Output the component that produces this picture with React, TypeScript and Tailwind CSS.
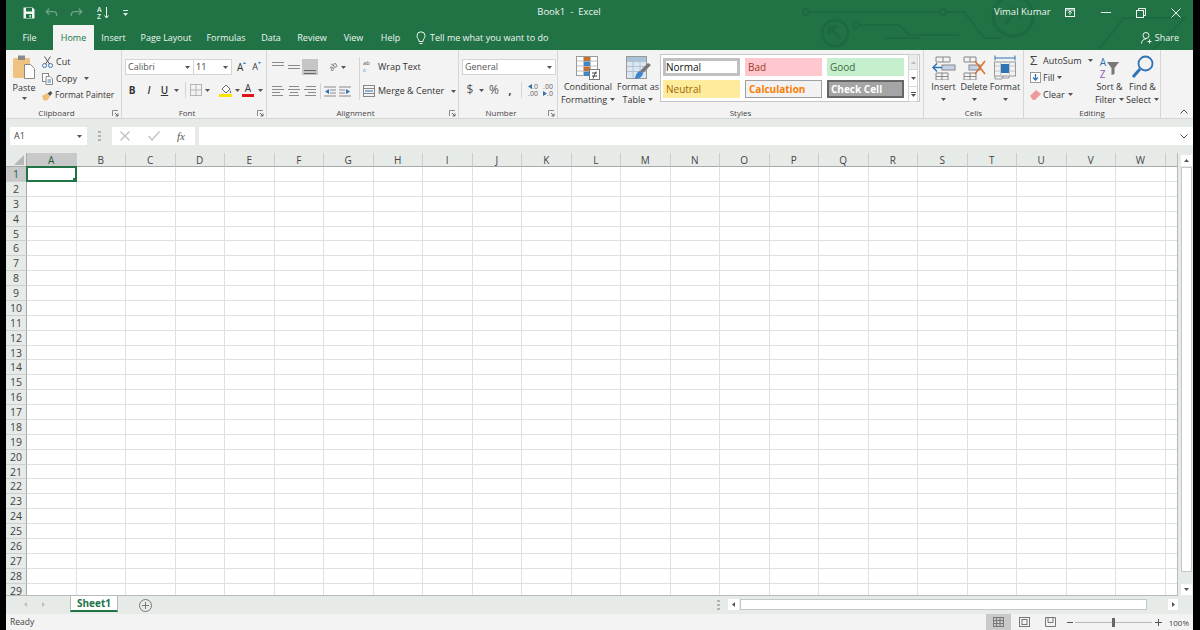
import type { ReactNode } from "react";

const FONT = "font-['Open_Sans','Noto_Sans',sans-serif]";
const COLUMNS = "ABCDEFGHIJKLMNOPQRSTUVW".split("");
const ROWS = Array.from({ length: 29 }, (_, i) => i + 1);

function Caret({ className = "" }: { className?: string }) {
  return (
    <svg width="5" height="3" viewBox="0 0 5 3" className={`shrink-0 ${className}`}>
      <path d="M0 0h5L2.500 3z" fill="#555" />
    </svg>
  );
}

function Launcher() {
  return (
    <svg width="7" height="7" viewBox="0 0 7 7" className="absolute right-[2px] top-[3px]">
      <path d="M0.500 6V0.500H6" fill="none" stroke="#8a8a8a" />
      <path d="M3 3l3 3M6 3.500V6H3.500" fill="none" stroke="#666" />
    </svg>
  );
}

function Tool({ w, children }: { w: number; children?: ReactNode }) {
  return (
    <span className="flex h-[16px] shrink-0 items-center justify-center" style={{ width: w }}>
      {children}
    </span>
  );
}

function Sep() {
  return <span className="block h-[16px] w-px bg-[#d4d4d4]" />;
}

function Dots() {
  return (
    <>
      <span className="h-[2px] w-[3px] bg-[#b0b4b2]" />
      <span className="h-[2px] w-[3px] bg-[#b0b4b2]" />
      <span className="h-[2px] w-[3px] bg-[#b0b4b2]" />
    </>
  );
}

function Group({
  w,
  label,
  launcher,
  children,
}: {
  w: number;
  label: string;
  launcher?: boolean;
  children: ReactNode;
}) {
  return (
    <div className="flex h-full shrink-0 flex-col border-r border-[#d6d6d6]" style={{ width: w }}>
      <div className="flex h-[57px] shrink-0">{children}</div>
      <div
        className={`relative h-[12px] text-center text-[8px] leading-[12px] text-[#444] ${
          launcher ? "pr-[14px]" : ""
        }`}
      >
        {label}
        {launcher && <Launcher />}
      </div>
    </div>
  );
}

function BigButton({
  w,
  lines,
  icon,
}: {
  w: number;
  lines: string[];
  icon: ReactNode;
}) {
  return (
    <div className="flex shrink-0 flex-col items-center" style={{ width: w }}>
      <div className="flex h-[28px] items-end justify-center">{icon}</div>
      <div className="text-center text-[9px] leading-[13px] whitespace-nowrap text-[#333]">
        {lines[0]}
      </div>
      <div className="flex h-[13px] items-center justify-center gap-[3px] text-[9px] leading-[13px] whitespace-nowrap text-[#333]">
        {lines[1]}
        <Caret />
      </div>
    </div>
  );
}

function StyleCell({ className, children }: { className: string; children: string }) {
  return (
    <div className={`flex h-[18px] w-[77px] items-center text-[10px] ${className}`}>
      {children}
    </div>
  );
}

function LinesIcon({ rows, highlight = false }: { rows: [number, number][]; highlight?: boolean }) {
  return (
    <svg width="12" height="10" viewBox="0 0 12 10">
      {rows.map(([x, w], i) => (
        <rect key={i} x={x} y={i * 3} width={w} height="1" fill={highlight ? "#666" : "#8a8a8a"} />
      ))}
    </svg>
  );
}

function TitleArt() {
  return (
    <svg
      width="400"
      height="50"
      viewBox="800 0 400 50"
      className="absolute top-0 right-0"
      fill="none"
      stroke="#1d6a40"
      strokeWidth="2"
    >
      <circle cx="813" cy="12" r="3" />
      <path d="M816 12h131" />
      <circle cx="950" cy="12" r="3" />
      <path d="M953 12h18l20 26h18" />
      <circle cx="842" cy="33" r="13" strokeWidth="3" />
      <path d="M848 39l-12-12M836 35v-8h8" strokeWidth="3" />
      <circle cx="863" cy="25" r="3" />
      <path d="M866 25h40l10 10h50" />
      <circle cx="1020" cy="16" r="20" strokeWidth="3" />
      <path d="M1012 24l15-15M1017 9h10v10" strokeWidth="3" />
      <path d="M892 38h36" />
      <path d="M1105 50l26-32h62M1160 50l32-32" />
    </svg>
  );
}

function TitleBar() {
  const tabs: [string, number][] = [
    ["File", 47],
    ["Home", 41],
    ["Insert", 39],
    ["Page Layout", 66],
    ["Formulas", 54],
    ["Data", 36],
    ["Review", 46],
    ["View", 37],
    ["Help", 37],
  ];
  return (
    <div className="relative h-[50px] shrink-0 bg-[#217346] text-[#eef5f1]">
      <TitleArt />
      <div className="relative flex h-[25px] items-center">
        <svg width="12" height="12" viewBox="0 0 12 12" className="ml-[17px]">
          <path d="M0.500 0.500h9l2 2v9h-11z" fill="#f2f7f4" />
          <rect x="3" y="1" width="6" height="3.500" fill="#217346" />
          <rect x="3" y="7" width="6" height="4" fill="#217346" />
          <rect x="6.500" y="8" width="1.300" height="2.500" fill="#f2f7f4" />
        </svg>
        <svg width="14" height="11" viewBox="0 0 16 11" className="ml-[10px]" fill="none" stroke="#6fa48a" strokeWidth="1.500">
          <path d="M5 1L1.500 4.500 5 8M2 4.500h8a3.500 3.500 0 0 1 3 5" />
        </svg>
        <Caret className="ml-[2px] opacity-40" />
        <svg width="14" height="11" viewBox="0 0 16 11" className="ml-[3px]" fill="none" stroke="#6fa48a" strokeWidth="1.500">
          <path d="M11 1l3.500 3.500L11 8M14 4.500H6a3.500 3.500 0 0 0-3 5" />
        </svg>
        <Caret className="ml-[2px] opacity-40" />
        <div className="ml-[7px] flex h-[14px] w-[14px] flex-col text-[7px] leading-[7px] font-semibold">
          <span>A</span>
          <span>Z</span>
        </div>
        <svg width="5" height="12" viewBox="0 0 5 12" className="-ml-[7px]" fill="none" stroke="#eef5f1">
          <path d="M2.500 0v11M0.500 8.500l2 2.500 2-2.500" />
        </svg>
        <svg width="5" height="6" viewBox="0 0 5 6" className="ml-[14px]" fill="#dcebe3">
          <rect width="5" height="1" />
          <path d="M0 3h5L2.500 6z" />
        </svg>
        <div className="absolute left-[563px] -translate-x-1/2 text-[9.500px] whitespace-pre">
          Book1{"  "}-{"  "}Excel
        </div>
        <div className="absolute left-[988px] text-[9.500px] whitespace-nowrap">Vimal Kumar</div>
        <svg width="10" height="9" viewBox="0 0 10 9" className="absolute left-[1059px]" fill="none" stroke="#eef5f1">
          <rect x="0.500" y="0.500" width="9" height="8" />
          <path d="M5 7V3M3.200 4.800L5 3l1.800 1.800" />
          <path d="M0.500 2h9" />
        </svg>
        <div className="absolute left-[1095px] h-px w-[10px] bg-[#eef5f1]" />
        <svg width="10" height="10" viewBox="0 0 10 10" className="absolute left-[1130px]" fill="none" stroke="#eef5f1">
          <rect x="0.500" y="2.500" width="7" height="7" />
          <path d="M2.500 2.500v-2h7v7h-2" />
        </svg>
        <svg width="10" height="10" viewBox="0 0 10 10" className="absolute left-[1165px]" fill="none" stroke="#eef5f1">
          <path d="M0.500 0.500l9 9M9.500 0.500l-9 9" />
        </svg>
      </div>
      <div className="relative flex h-[25px]">
        {tabs.map(([name, w]) => (
          <div
            key={name}
            className={`flex shrink-0 items-center justify-center text-[9px] ${
              name === "Home" ? "bg-[#f3f3f3] text-[#217346]" : ""
            }`}
            style={{ width: w }}
          >
            {name}
          </div>
        ))}
        <svg width="10" height="14" viewBox="0 0 10 14" className="mt-[6px] ml-[7px]" fill="none" stroke="#eef5f1">
          <path d="M3 10.500C3 8 1 7.500 1 4.800a4 4 0 0 1 8 0C9 7.500 7 8 7 10.500zM3.500 12.500h3" />
        </svg>
        <div className="ml-[4px] flex items-center text-[9px] whitespace-nowrap">
          Tell me what you want to do
        </div>
        <div className="absolute right-[14px] flex h-full items-center gap-[3px] text-[9px]">
          <svg width="11" height="12" viewBox="0 0 11 12" fill="none" stroke="#eef5f1">
            <circle cx="5" cy="3.500" r="3" />
            <path d="M0.500 11.500c0-3 2-4.500 4.500-4.500M8.500 7.500v4M6.500 9.500h4" />
          </svg>
          Share
        </div>
      </div>
    </div>
  );
}

function Clipboard() {
  return (
    <Group w={116} label="Clipboard" launcher>
      <div className="flex w-[36px] shrink-0 flex-col items-center pt-[5px]">
        <svg width="22" height="24" viewBox="0 0 22 24">
          <rect x="0" y="3" width="17" height="20" rx="1" fill="#efc27f" />
          <rect x="5" y="0.500" width="7" height="4.500" fill="#8b8b8b" />
          <path d="M11.500 9.500h6l4 4v10h-10z" fill="#fff" stroke="#8a8a8a" />
        </svg>
        <div className="mt-[2px] text-[9px] leading-[13px] text-[#333]">Paste</div>
        <Caret className="mt-[3px]" />
      </div>
      <div className="flex flex-col pt-[3px] text-[9px] whitespace-nowrap text-[#333]">
        <div className="flex h-[17px] items-center">
          <svg width="11" height="12" viewBox="0 0 11 12" fill="none" stroke="#3f79b5" className="mr-[3px]">
            <circle cx="2.500" cy="9.500" r="2" />
            <circle cx="8.500" cy="9.500" r="2" />
            <path d="M3.500 8L8.500 0.500M7.500 8L2.500 0.500" stroke="#555" />
          </svg>
          Cut
        </div>
        <div className="flex h-[17px] items-center">
          <svg width="11" height="12" viewBox="0 0 11 12" fill="#fff" stroke="#8a8a8a" className="mr-[3px]">
            <rect x="0.500" y="0.500" width="6" height="8" />
            <path d="M4 3.500h4l2.500 2.500v5.500H4z" />
            <path d="M5.500 7h3.500M5.500 9h3.500" stroke="#3f79b5" />
          </svg>
          Copy
          <Caret className="ml-[7px]" />
        </div>
        <div className="flex h-[17px] items-center text-[8.500px]">
          <svg width="11" height="11" viewBox="0 0 11 11" className="mr-[2px]">
            <path d="M0 6l5-3 3 4-3 3.500H1.500z" fill="#edc07a" />
            <path d="M5.500 3.500l3-2.500 2 2-2.500 3z" fill="#555" />
          </svg>
          Format Painter
        </div>
      </div>
    </Group>
  );
}

function Font() {
  return (
    <Group w={145} label="Font" launcher>
      <div className="flex flex-col pt-[9px] pl-[2px] text-[#333]">
        <div className="flex h-[16px] items-center">
          <div className="ml-[1px] flex h-[16px] w-[69px] items-center justify-between border border-[#d4d4d4] bg-white pr-[3px] pl-[2px] text-[9px] text-[#555]">
            Calibri
            <Caret />
          </div>
          <div className="flex h-[16px] w-[38px] items-center justify-between border border-l-0 border-[#d4d4d4] bg-white pr-[3px] pl-[2px] text-[9px]">
            11
            <Caret />
          </div>
          <span className="ml-[5px] text-[10px]">A</span>
          <svg width="3" height="2" viewBox="0 0 3 2" className="mb-[8px]"><path d="M0 2h3L1.500 0z" fill="#3f79b5" /></svg>
          <span className="ml-[6px] text-[9px]">A</span>
          <svg width="3" height="2" viewBox="0 0 3 2" className="mb-[8px]"><path d="M0 0h3L1.500 2z" fill="#3f79b5" /></svg>
        </div>
        <div className="mt-[7px] flex h-[16px] items-center text-[10px]">
          <Tool w={16}><b>B</b></Tool>
          <Tool w={18}><i className="font-semibold">I</i></Tool>
          <Tool w={13}><span className="font-semibold underline">U</span></Tool>
          <Tool w={11}><Caret /></Tool>
          <Tool w={6}><Sep /></Tool>
          <Tool w={16}>
            <svg width="12" height="12" viewBox="0 0 12 12" fill="none" stroke="#b5b5b5">
              <rect x="0.500" y="0.500" width="11" height="11" />
              <path d="M6 0.500v11M0.500 6h11" />
            </svg>
          </Tool>
          <Tool w={6}><Caret /></Tool>
          <Tool w={6} />
          <Tool w={18}>
            <svg width="13" height="14" viewBox="0 0 13 14">
              <path d="M3 6l4-4 4 4-4 4z" fill="#fff" stroke="#666" />
              <path d="M11 7c1 1.500 1.500 2 1 3-.8.600-1.500-.4-1-3z" fill="#666" />
              <rect y="11" width="13" height="3" fill="#ffe600" />
            </svg>
          </Tool>
          <Tool w={6}><Caret /></Tool>
          <Tool w={16}>
            <span className="relative flex h-[14px] w-[12px] justify-center text-[10px] leading-[11px]">
              A
              <span className="absolute bottom-0 left-0 h-[3px] w-[12px] bg-[#e0121c]" />
            </span>
          </Tool>
          <Tool w={8}><Caret /></Tool>
        </div>
      </div>
    </Group>
  );
}

function Alignment() {
  const left: [number, number][] = [[0, 10], [0, 12], [0, 8], [0, 11]];
  const center: [number, number][] = [[1, 10], [0, 12], [2, 8], [1, 10]];
  const right: [number, number][] = [[2, 10], [0, 12], [4, 8], [1, 11]];
  return (
    <Group w={192} label="Alignment" launcher>
      <div className="flex flex-col pt-[9px] pl-[3px]">
        <div className="flex h-[16px]">
          <Tool w={16}><LinesIcon rows={[[0, 12], [0, 12], [20, 0], [20, 0]]} /></Tool>
          <Tool w={16}><LinesIcon rows={[[20, 0], [0, 12], [0, 12], [20, 0]]} /></Tool>
          <span className="flex h-[16px] w-[16px] items-end justify-center bg-[#c6c6c6] pb-[1px]">
            <LinesIcon highlight rows={[[20, 0], [20, 0], [0, 12], [0, 12]]} />
          </span>
          <Tool w={8} />
          <Tool w={14}>
            <span className="-rotate-45 text-[7.500px] leading-none text-[#555]">ab</span>
          </Tool>
          <Tool w={6}><Caret /></Tool>
        </div>
        <div className="mt-[8px] flex h-[16px]">
          <Tool w={16}><LinesIcon rows={left} /></Tool>
          <Tool w={16}><LinesIcon rows={center} /></Tool>
          <Tool w={16}><LinesIcon rows={right} /></Tool>
          <Tool w={5}><Sep /></Tool>
          <Tool w={14}>
            <svg width="12" height="11" viewBox="0 0 12 11">
              <path d="M0 1h12M6 4h6M6 7h6M0 10h12" stroke="#8a8a8a" />
              <path d="M5 3v5L1 5.500z" fill="#2f74b5" />
            </svg>
          </Tool>
          <Tool w={16}>
            <svg width="12" height="11" viewBox="0 0 12 11">
              <path d="M0 1h12M0 4h6M0 7h6M0 10h12" stroke="#8a8a8a" />
              <path d="M7 3v5l4-2.500z" fill="#2f74b5" />
            </svg>
          </Tool>
        </div>
      </div>
      <div className="mt-[7px] ml-[6px] h-[43px] w-px bg-[#d4d4d4]" />
      <div className="ml-[3px] flex flex-col pt-[9px] text-[9px] whitespace-nowrap text-[#333]">
        <div className="flex h-[16px] items-center">
          <span className="mr-[3px] flex w-[12px] flex-col text-[6px] leading-[7px] text-[#555]">
            <span>ab</span>
            <span className="text-[#2f74b5]">c</span>
          </span>
          Wrap Text
        </div>
        <div className="mt-[8px] flex h-[16px] items-center">
          <svg width="12" height="12" viewBox="0 0 12 12" fill="none" stroke="#888" className="mr-[3px]">
            <rect x="0.500" y="0.500" width="11" height="11" />
            <path d="M0.500 3.500h11M0.500 8.500h11" />
            <path d="M2 6h8" stroke="#2f74b5" />
          </svg>
          Merge &amp; Center
          <Caret className="ml-[7px]" />
        </div>
      </div>
    </Group>
  );
}

function NumberGroup() {
  return (
    <Group w={99} label="Number" launcher>
      <div className="flex flex-col pt-[9px] pl-[3px] text-[#555]">
        <div className="flex h-[16px] w-[94px] items-center justify-between border border-[#d4d4d4] bg-white pr-[3px] pl-[2px] text-[9px]">
          General
          <Caret />
        </div>
        <div className="mt-[7px] flex h-[16px] items-center text-[12px]">
          <Tool w={16}>$</Tool>
          <Tool w={6}><Caret /></Tool>
          <Tool w={20}>%</Tool>
          <Tool w={12}><b>,</b></Tool>
          <Tool w={10}><Sep /></Tool>
          <Tool w={14}>
            <span className="flex flex-col items-end text-[7px] leading-[7px] text-[#666]">
              <span className="flex items-center">
                <svg width="4" height="5" viewBox="0 0 4 5"><path d="M4 0v5L0 2.500z" fill="#2f74b5" /></svg>
                .0
              </span>
              <span>.00</span>
            </span>
          </Tool>
          <Tool w={16}>
            <span className="flex flex-col items-end text-[7px] leading-[7px] text-[#666]">
              <span>.00</span>
              <span className="flex items-center">
                <svg width="4" height="5" viewBox="0 0 4 5"><path d="M0 0v5l4-2.500z" fill="#2f74b5" /></svg>
                .0
              </span>
            </span>
          </Tool>
        </div>
      </div>
    </Group>
  );
}

function Styles() {
  return (
    <Group w={366} label="Styles">
      <div className="flex pt-[2px] pl-[2px]">
        <BigButton
          w={56}
          lines={["Conditional", "Formatting"]}
          icon={
            <svg width="24" height="24" viewBox="0 0 24 24">
              <rect x="0.500" y="0.500" width="21" height="19" fill="#fff" stroke="#9a9a9a" />
              <path d="M7.500 1v19M14.500 1v19M1 5h20M1 10h20M1 15h20" stroke="#bdbdbd" />
              <rect x="8" y="1" width="6" height="4" fill="#c9702b" />
              <rect x="8" y="5.500" width="6" height="4.500" fill="#3f86c9" />
              <rect x="8" y="10.500" width="6" height="4.500" fill="#c9702b" />
              <rect x="8" y="15.500" width="6" height="4.500" fill="#3f86c9" />
              <rect x="13.500" y="13.500" width="10" height="10" fill="#fff" stroke="#777" />
              <path d="M16 17h5M16 20h5M20 15.500l-3 7" stroke="#444" fill="none" />
            </svg>
          }
        />
        <BigButton
          w={44}
          lines={["Format as", "Table"]}
          icon={
            <svg width="25" height="24" viewBox="0 0 25 24">
              <rect x="0.500" y="0.500" width="20" height="22" fill="#dbe7f2" stroke="#9a9a9a" />
              <rect x="1" y="1" width="19" height="4" fill="#a9c3dc" />
              <path d="M7 1v21M14 1v21M1 5.500h19M1 10.500h19M1 15.500h19" stroke="#b4c0cb" />
              <path d="M14 15l8-8 3 2-8 8z" fill="#777" />
              <path d="M9 23c0-4 3-8 5-8l3 2c0 3-4 6-8 6z" fill="#3f86c9" />
            </svg>
          }
        />
      </div>
      <div className="mt-[4px] flex h-[48px] w-[260px] border border-[#c6c6c6] bg-white">
        <div className="grid grid-cols-[77px_77px_77px] grid-rows-[18px_18px] gap-x-[5px] gap-y-[4px] pt-[3px] pl-[2px]">
          <StyleCell className="box-border border-[3px] border-[#c0c0c0] bg-white text-[#111]">Normal</StyleCell>
          <StyleCell className="bg-[#ffc7ce] pl-[3px] text-[#9c3a1c]">Bad</StyleCell>
          <StyleCell className="bg-[#c6efce] pl-[3px] text-[#3f6b3f]">Good</StyleCell>
          <StyleCell className="bg-[#ffeb9c] pl-[3px] text-[#9c6500]">Neutral</StyleCell>
          <StyleCell className="border border-[#a0a0a0] bg-[#f2f2f2] pl-[3px] font-bold text-[#fa7d00]">Calculation</StyleCell>
          <StyleCell className="border-[2px] border-[#666] bg-[#a5a5a5] pl-[2px] font-bold text-white">Check Cell</StyleCell>
        </div>
        <div className="mt-[-1px] mb-[-1px] ml-[4px] flex w-[10px] flex-col">
          <span className="flex h-[16px] items-center justify-center border border-[#d4d4d4] bg-[#ebebeb]">
            <Caret className="rotate-180 opacity-30" />
          </span>
          <span className="flex h-[16px] items-center justify-center border-x border-[#d4d4d4]">
            <Caret />
          </span>
          <span className="flex h-[16px] flex-col items-center justify-center gap-px border border-[#d4d4d4]">
            <span className="h-px w-[5px] bg-[#555]" />
            <Caret />
          </span>
        </div>
      </div>
    </Group>
  );
}

function Cells() {
  return (
    <Group w={100} label="Cells">
      <div className="flex pt-[2px] pl-[4px]">
        <BigButton
          w={31}
          lines={["Insert", ""]}
          icon={
            <svg width="24" height="24" viewBox="0 0 24 24" fill="none">
              <path d="M4 1h14v5H4zM11 1v5M4 17h12v7H4v-7M10 17v7M4 20.500h12" stroke="#888" />
              <rect x="10" y="9" width="13" height="5" fill="#c2d4e6" stroke="#888" />
              <path d="M10 11.500H1M5 7.500l-4 4 4 4" stroke="#2f74b5" strokeWidth="1.500" />
            </svg>
          }
        />
        <BigButton
          w={30}
          lines={["Delete", ""]}
          icon={
            <svg width="24" height="24" viewBox="0 0 24 24" fill="none">
              <path d="M2 1h12v5H2zM8 1v5M2 17h12v7H2v-7M8 17v7M2 20.500h12" stroke="#888" />
              <rect x="7" y="9" width="11" height="5" fill="#c2d4e6" stroke="#888" />
              <path d="M13 5l10 13M23 5L13 18" stroke="#d9702b" strokeWidth="1.500" />
            </svg>
          }
        />
        <BigButton
          w={32}
          lines={["Format", ""]}
          icon={
            <svg width="23" height="25" viewBox="0 0 23 25" fill="none">
              <path d="M1 3h20M1 0.500v5M21 0.500v5" stroke="#2f74b5" />
              <rect x="0.500" y="7" width="21" height="14" stroke="#999" />
              <path d="M6.500 7v14M15.500 7v14M1 11h20M1 16h20" stroke="#c4c4c4" />
              <rect x="7" y="9" width="8" height="9" fill="#2f74b5" />
              <path d="M1 21v3h7v-3M9 21v2h6v-2" stroke="#999" />
            </svg>
          }
        />
      </div>
    </Group>
  );
}

function Editing() {
  return (
    <Group w={137} label="Editing">
      <div className="flex w-[69px] shrink-0 flex-col pt-[2px] pl-[6px] text-[9px] text-[#333]">
        <div className="flex h-[17px] items-center">
          <span className="w-[13px] text-[13px] leading-none text-[#444]">Σ</span>
          AutoSum
          <Caret className="ml-[6px]" />
        </div>
        <div className="flex h-[17px] items-center">
          <svg width="11" height="11" viewBox="0 0 11 11" className="mr-[2px]">
            <rect x="0.500" y="0.500" width="10" height="10" fill="#fff" stroke="#9a9a9a" />
            <path d="M5.500 2v6M3 5.500l2.500 2.500L8 5.500" fill="none" stroke="#2f74b5" strokeWidth="1.300" />
          </svg>
          Fill
          <Caret className="ml-[3px]" />
        </div>
        <div className="flex h-[17px] items-center">
          <svg width="11" height="10" viewBox="0 0 11 10" className="mr-[2px]">
            <path d="M0 6l6-6 5 4-6 6H3z" fill="#ee9a9a" />
          </svg>
          Clear
          <Caret className="ml-[3px]" />
        </div>
      </div>
      <div className="flex pt-[2px]">
        <BigButton
          w={33}
          lines={["Sort &", "Filter"]}
          icon={
            <span className="flex items-center">
              <span className="flex flex-col text-[10px] leading-[12px]">
                <span className="text-[#2f74b5]">A</span>
                <span className="text-[#8e5bb5]">Z</span>
              </span>
              <svg width="12" height="13" viewBox="0 0 12 13" className="ml-[1px]">
                <path d="M0 0h12L7.500 6v6l-3 1V6z" fill="#777" />
              </svg>
            </span>
          }
        />
        <BigButton
          w={33}
          lines={["Find &", "Select"]}
          icon={
            <svg width="23" height="25" viewBox="0 0 23 25" fill="none">
              <circle cx="14.500" cy="8.500" r="7" stroke="#2f74b5" strokeWidth="1.800" />
              <path d="M9 14L2 22" stroke="#2f74b5" strokeWidth="3" />
            </svg>
          }
        />
      </div>
    </Group>
  );
}

function Ribbon() {
  return (
    <div className="relative flex h-[69px] shrink-0 border-b border-[#d2d6d4] bg-[#f3f3f3]">
      <Clipboard />
      <Font />
      <Alignment />
      <NumberGroup />
      <Styles />
      <Cells />
      <Editing />
      <svg width="8" height="5" viewBox="0 0 8 5" className="absolute right-[5px] bottom-[4px]" fill="none" stroke="#555">
        <path d="M0.500 4.500L4 1l3.500 3.500" />
      </svg>
    </div>
  );
}

function FormulaBar() {
  return (
    <div className="flex h-[33px] shrink-0 items-start bg-[#e6ebe8] pt-[8px] text-[#444]">
      <div className="ml-[4px] flex h-[18px] w-[77px] items-center justify-between bg-white pr-[5px] pl-[4px] text-[9px]">
        A1
        <Caret />
      </div>
      <div className="ml-[11px] flex h-[18px] w-[3px] flex-col justify-center gap-[2px]">
        <Dots />
      </div>
      <div className="ml-[11px] flex h-[18px] w-[83px] items-center bg-white pl-[8px]">
        <svg width="10" height="10" viewBox="0 0 10 10" fill="none" stroke="#bdbdbd" strokeWidth="1.200">
          <path d="M0.500 0.500l9 9M9.500 0.500l-9 9" />
        </svg>
        <svg width="12" height="10" viewBox="0 0 12 10" fill="none" stroke="#bdbdbd" strokeWidth="1.200" className="ml-[18px]">
          <path d="M0.500 5l3.500 4 7.500-8.500" />
        </svg>
        <span className="ml-[17px] font-['Liberation_Serif',serif] text-[11px] text-[#555] italic">fx</span>
      </div>
      <div className="ml-[4px] flex h-[18px] flex-1 items-center justify-end bg-white pr-[5px]">
        <svg width="8" height="5" viewBox="0 0 8 5" fill="none" stroke="#555">
          <path d="M0.500 0.500L4 4l3.500-3.500" />
        </svg>
      </div>
    </div>
  );
}

function Row({ n }: { n: number }) {
  return (
    <>
      <div
        className={`border-r border-b border-r-[#a6aaa8] border-b-[#ccd0ce] text-center text-[10.500px] leading-[15px] ${
          n === 1 ? "bg-[#c9c9c9] text-[#215f3d]" : "text-[#444]"
        }`}
      >
        {n}
      </div>
      {COLUMNS.map((c) => (
        <div key={c} className="relative border-r border-b border-[#dde1df] bg-white">
          {n === 1 && c === "A" && (
            <span className="absolute -top-px -right-px -bottom-px -left-px border-[2px] border-[#217346]">
              <span className="absolute -right-[2px] -bottom-[2px] h-[4px] w-[4px] bg-[#217346]" />
            </span>
          )}
        </div>
      ))}
      <div className="border-b border-[#dde1df] bg-white" />
    </>
  );
}

function Sheet() {
  return (
    <div className="flex min-h-0 flex-1 bg-[#e6ebe8] pt-px">
      <div className="min-w-0 flex-1 overflow-hidden border-r border-b border-[#b6bab8]">
        <div className="grid grid-cols-[21px_repeat(23,49.5px)_1fr] grid-rows-[14px] auto-rows-[14.89px]">
          <div className="relative border-r border-b border-[#a6aaa8]">
            <span className="absolute right-[2px] bottom-[1px] h-0 w-0 border-b-[10px] border-l-[10px] border-b-[#b4b8b6] border-l-transparent" />
          </div>
          {COLUMNS.map((c) => (
            <div
              key={c}
              className={`border-r border-b border-r-[#c9cdcb] border-b-[#a6aaa8] text-center text-[10px] leading-[14px] ${
                c === "A" ? "bg-[#c9c9c9] text-[#215f3d]" : "text-[#444]"
              }`}
            >
              {c}
            </div>
          ))}
          <div className="border-b border-[#a6aaa8]" />
          {ROWS.map((r) => (
            <Row key={r} n={r} />
          ))}
        </div>
      </div>
      <div className="flex w-[15px] shrink-0 flex-col items-center pt-[2px] pl-[2px]">
        <span className="flex h-[11px] w-[11px] shrink-0 items-center justify-center bg-white">
          <Caret className="rotate-180" />
        </span>
        <span className="mt-px h-[405px] w-[11px] shrink-0 border border-[#c4c8c6] bg-white" />
        <span className="mt-auto mb-[1px] flex h-[11px] w-[11px] shrink-0 items-center justify-center bg-white">
          <Caret />
        </span>
      </div>
    </div>
  );
}

function SheetTabs() {
  return (
    <div className="flex h-[18px] shrink-0 items-start bg-[#e6ebe8]">
      <svg width="3" height="5" viewBox="0 0 3 5" className="mt-[6px] ml-[18px]"><path d="M3 0v5L0 2.500z" fill="#b9bdbb" /></svg>
      <svg width="3" height="5" viewBox="0 0 3 5" className="mt-[6px] ml-[15px]"><path d="M0 0v5l3-2.500z" fill="#b9bdbb" /></svg>
      <div className="ml-[25px] flex h-[16px] w-[48px] items-center justify-center border-x border-b-[2px] border-x-[#b6bab8] border-b-[#217346] bg-white text-[10px] font-bold text-[#217346]">
        Sheet1
      </div>
      <svg width="13" height="13" viewBox="0 0 13 13" fill="none" stroke="#777" className="mt-[3px] ml-[21px]">
        <circle cx="6.500" cy="6.500" r="6" />
        <path d="M6.500 3v7M3 6.500h7" />
      </svg>
      <div className="ml-[565px] flex h-[14px] flex-col justify-center gap-[2px] self-center">
        <Dots />
      </div>
      <span className="mt-[3px] ml-[8px] flex h-[11px] w-[11px] items-center justify-center bg-white">
        <Caret className="rotate-90" />
      </span>
      <span className="mt-[3px] ml-px h-[11px] w-[407px] border border-[#c4c8c6] bg-white" />
      <span className="mt-[3px] ml-[21px] flex h-[11px] w-[10px] items-center justify-center bg-white">
        <Caret className="-rotate-90" />
      </span>
    </div>
  );
}

function StatusBar() {
  return (
    <div className="flex h-[16px] shrink-0 items-center bg-[#f3f3f3] text-[8.500px] text-[#444]">
      <span className="mt-px ml-[4px]">Ready</span>
      <div className="ml-auto flex h-full w-[25px] items-center justify-center bg-[#c9c9c9]">
        <svg width="11" height="10" viewBox="0 0 11 10" fill="none" stroke="#777">
          <rect x="0.500" y="0.500" width="10" height="9" />
          <path d="M3.500 0.500v9M7 0.500v9M0.500 3.500h10M0.500 6.500h10" />
        </svg>
      </div>
      <svg width="11" height="10" viewBox="0 0 11 10" fill="none" stroke="#777" className="ml-[8px]">
        <rect x="0.500" y="0.500" width="10" height="9" />
        <rect x="3" y="2.500" width="5" height="5" />
      </svg>
      <svg width="11" height="10" viewBox="0 0 11 10" fill="none" stroke="#777" className="ml-[15px]">
        <path d="M0.500 0.500h10v9h-10zM3 0.500v5h5v-5" />
      </svg>
      <span className="ml-[11px] h-px w-[6px] bg-[#555]" />
      <div className="relative ml-[2px] h-px w-[77px] bg-[#b9b9b9]">
        <span className="absolute top-[-4px] left-[37px] h-[9px] w-[3px] bg-[#666]" />
      </div>
      <svg width="7" height="7" viewBox="0 0 7 7" stroke="#555" className="ml-[3px]">
        <path d="M3.500 0v7M0 3.500h7" />
      </svg>
      <span className="mt-px mr-[4px] ml-[7px] text-[8px]">100%</span>
    </div>
  );
}

export default function App() {
  return (
    <div className={`flex h-[630px] w-[1200px] overflow-hidden bg-black ${FONT}`}>
      <div className="ml-[6px] flex h-full w-[1187px] flex-col">
        <TitleBar />
        <Ribbon />
        <FormulaBar />
        <Sheet />
        <SheetTabs />
        <StatusBar />
      </div>
    </div>
  );
}
